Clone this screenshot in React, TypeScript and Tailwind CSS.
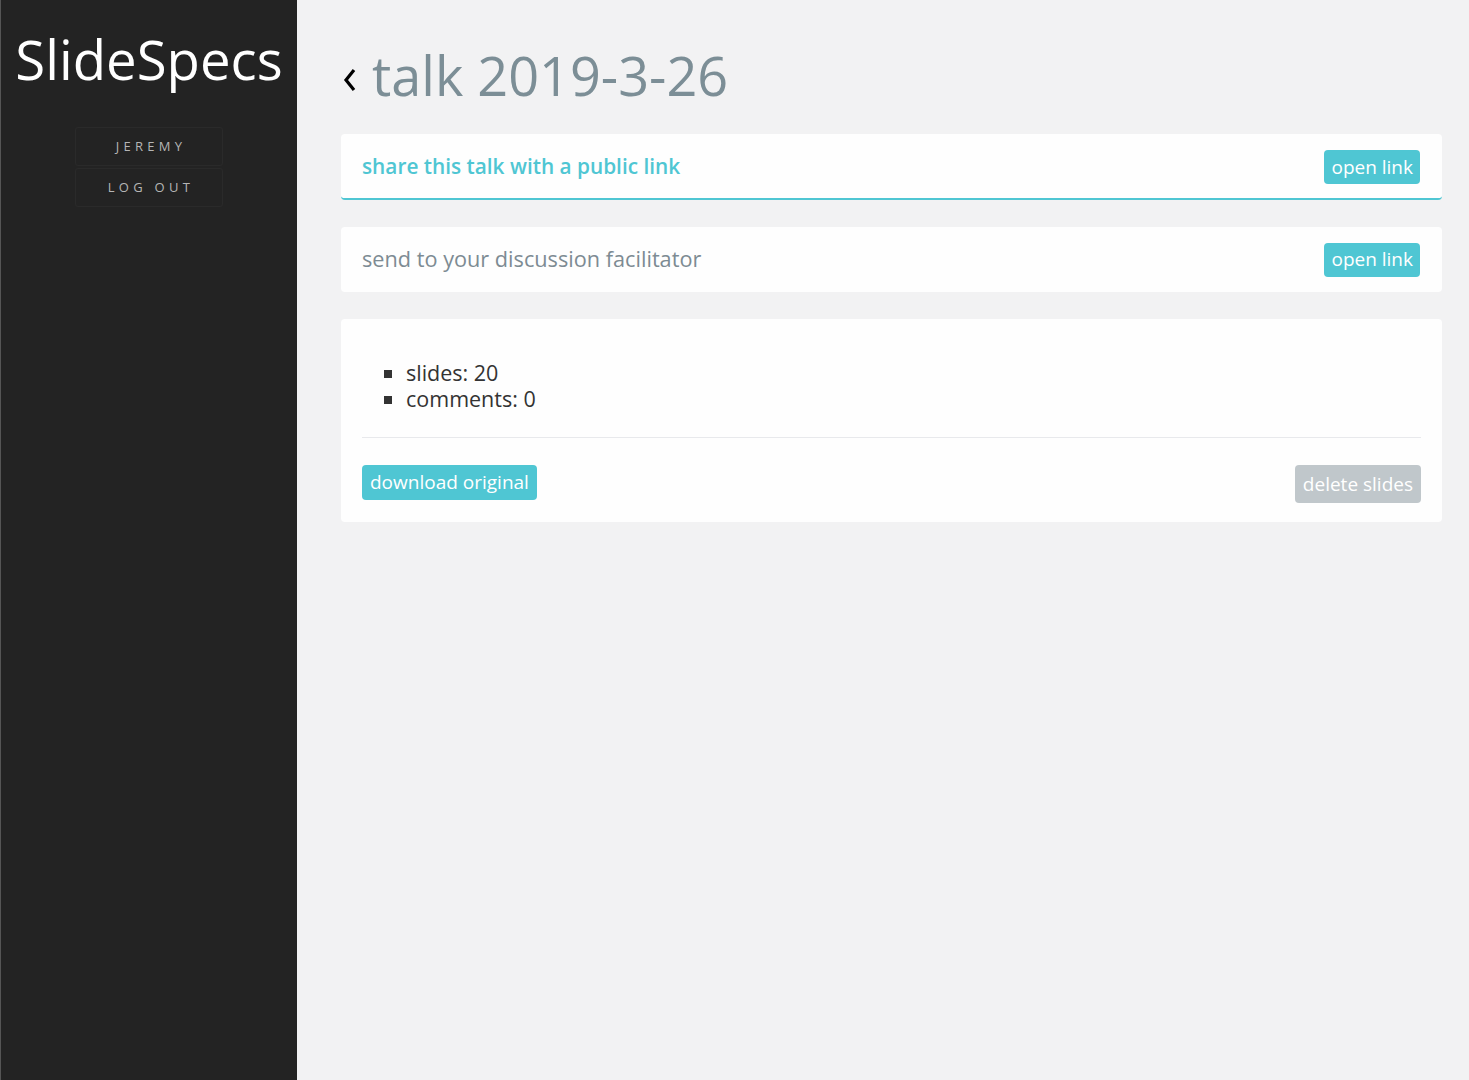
import React from "react";

export default function App() {
  const font = { fontFamily: '"Open Sans", "Noto Sans", sans-serif' };
  return (
    <div className="flex h-[1080px] w-full bg-[#f2f2f3]" style={font}>
      <aside className="flex w-[297px] shrink-0 flex-col items-center border-l border-[#555] bg-[#232323]">
        <h1 className="mt-[23px] text-[54.5px] leading-[72px] font-normal text-white">SlideSpecs</h1>
        <nav className="mt-[32px] flex w-[148px] flex-col gap-[2px]">
          <button className="h-[39px] rounded-[3px] border border-[#2a2a2a] pl-[4px] text-[13px] tracking-[0.33em] text-[#b5b5b5]">
            JEREMY
          </button>
          <button className="h-[39px] rounded-[3px] border border-[#2a2a2a] pl-[4px] text-[13px] tracking-[0.33em] text-[#b5b5b5]">
            LOG OUT
          </button>
        </nav>
      </aside>
      <main className="flex-1 pl-[44px] pr-[27px]">
        <div className="mt-[40px] flex h-[70px] items-center">
          <svg width="16" height="24" viewBox="0 0 16 24" className="mt-[10px] ml-[1px]">
            <polyline points="12,2 4,12 12,22" fill="none" stroke="#000" strokeWidth="3.2" strokeLinecap="butt" strokeLinejoin="miter" />
          </svg>
          <h2 className="ml-[14px] text-[54px] leading-[70px] text-[#7c8e96]">talk 2019-3-26</h2>
        </div>
        <div className="mt-[24px] flex h-[66px] items-center justify-between rounded-[4px] border-b-2 border-[#4fc6d3] bg-[#fefefe] pl-[21px] pr-[22px]">
          <span className="mt-[1px] text-[20.8px] font-semibold text-[#4fc6d3]">share this talk with a public link</span>
          <button className="mt-[2px] h-[34px] rounded-[4px] bg-[#4fc6d3] px-[7px] text-[19px] text-white">open link</button>
        </div>
        <div className="mt-[27px] flex h-[65px] items-center justify-between rounded-[4px] bg-[#fefefe] pl-[21px] pr-[22px]">
          <span className="text-[21.7px] text-[#7d8b93]">send to your discussion facilitator</span>
          <button className="h-[34px] rounded-[4px] bg-[#4fc6d3] px-[7px] text-[19px] text-white">open link</button>
        </div>
        <div className="mt-[27px] rounded-[4px] bg-[#fefefe] px-[21px] pt-[41px] pb-[19px]">
          <ul className="list-[square] pl-[44px] text-[21.5px] leading-[26px] text-[#333]">
            <li>slides: 20</li>
            <li>comments: 0</li>
          </ul>
          <hr className="mt-[25px] border-t border-[#e8e9ec]" />
          <div className="mt-[27px] flex items-start justify-between">
            <button className="h-[35px] rounded-[4px] bg-[#4fc6d3] px-[8px] text-[19px] text-white">download original</button>
            <button className="h-[38px] rounded-[4px] bg-[#c0c7cb] px-[8px] text-[19px] text-white">delete slides</button>
          </div>
        </div>
      </main>
    </div>
  );
}
